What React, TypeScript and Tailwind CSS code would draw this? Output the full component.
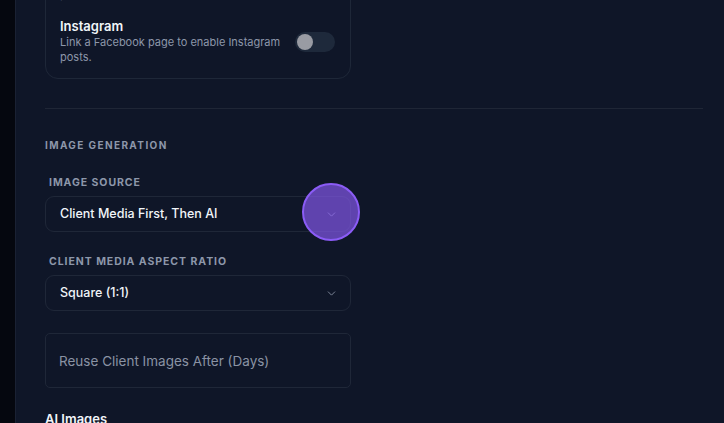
import { ChevronDown } from "lucide-react";

function FieldLabel({ children }: { children: string }) {
  return (
    <div className="pl-[4px] text-[10.5px] font-bold uppercase leading-[14px] tracking-[0.09em] text-[#8d97aa]">
      {children}
    </div>
  );
}

function SelectBox({ value, active }: { value: string; active?: boolean }) {
  return (
    <div className="relative mt-[6px] flex h-[36px] w-[306px] items-center justify-between rounded-[9px] border border-[#1f2738] px-[14px]">
      <span className="text-[12.5px] font-medium text-[#f1f5f9]">{value}</span>
      <ChevronDown className="mr-[-2px] h-[13px] w-[13px] text-[#8a93a6]" strokeWidth={1.6} />
      {active && (
        <div className="pointer-events-none absolute left-[256px] top-[-14px] h-[58px] w-[58px] rounded-full border-[2.5px] border-[#8b5cf6] bg-[#8b5cf6]/65" />
      )}
    </div>
  );
}

export default function App() {
  return (
    <div
      className="flex h-[423px] w-[724px] overflow-hidden bg-[#0f1628]"
      style={{ fontFamily: "Inter, 'Noto Sans', sans-serif" }}
    >
      <div className="w-[16px] shrink-0 border-r border-[#1a2133] bg-[#05070f]" />
      <div className="flex-1 pl-[29px] pr-[21px]">
        <div className="mt-[-46px] w-[306px] rounded-[13px] border border-[#1e2738] px-[14px] pt-[14px] pb-[13px]">
          <div className="flex flex-col gap-[15px]">
            <div>
              <div className="text-[13px] font-semibold leading-[18px] text-[#f1f5f9]">Facebook</div>
              <div className="text-[11px] leading-[15px] text-[#8d97aa]">publish to the connected account.</div>
            </div>
            <div className="flex items-center justify-between">
              <div className="w-[230px]">
                <div className="text-[13px] font-semibold leading-[18px] text-[#f1f5f9]">Instagram</div>
                <div className="text-[11px] leading-[15px] text-[#8d97aa]">
                  Link a Facebook page to enable Instagram posts.
                </div>
              </div>
              <div className="mt-[1px] mr-[1px] flex h-[20px] w-[40px] items-center rounded-full bg-[#1e293b] px-[2px]">
                <div className="h-[16px] w-[16px] rounded-full bg-[#999ba3]" />
              </div>
            </div>
          </div>
        </div>

        <div className="mt-[29px] h-px bg-[#1f2636]" />

        <div className="mt-[29px] text-[10px] font-bold uppercase leading-[14px] tracking-[0.14em] text-[#8d97aa]">
          Image Generation
        </div>

        <div className="mt-[24px]">
          <FieldLabel>Image Source</FieldLabel>
          <SelectBox value="Client Media First, Then AI" active />
        </div>

        <div className="mt-[23px]">
          <FieldLabel>Client Media Aspect Ratio</FieldLabel>
          <SelectBox value="Square (1:1)" />
        </div>

        <div className="mt-[22px] flex h-[55px] w-[306px] items-center rounded-[5px] border border-[#1f2738] px-[13px] pt-[2px]">
          <span className="text-[13.5px] text-[#8a93a4]">Reuse Client Images After (Days)</span>
        </div>

        <div className="mt-[22px] text-[13px] font-semibold leading-[18px] text-[#f1f5f9]">AI Images</div>
      </div>
    </div>
  );
}
